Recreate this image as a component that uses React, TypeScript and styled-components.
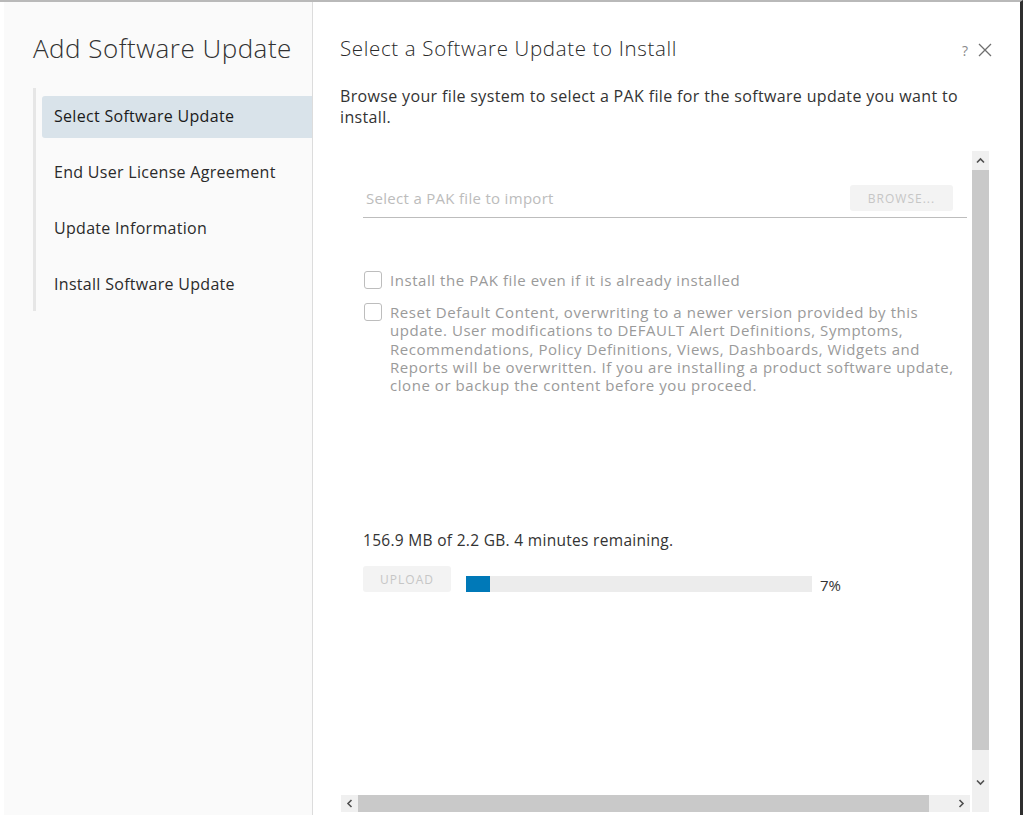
import React from 'react';
import styled, { createGlobalStyle } from 'styled-components';

const GlobalStyle = createGlobalStyle`
  html, body {
    margin: 0;
    padding: 0;
    background: #ffffff;
  }
  * {
    box-sizing: border-box;
  }
`;

const Frame = styled.div`
  width: 1023px;
  height: 815px;
  display: flex;
  border-top: 2px solid #b9b9b9;
  border-right: 3px solid #2f2f2f;
  padding-left: 4px;
  background: #ffffff;
  overflow: hidden;
`;

const Sidebar = styled.aside`
  width: 309px;
  flex-shrink: 0;
  background: #fafafa;
  border-right: 1px solid #dcdcdc;
  padding: 28px 0 0 29px;
  font-family: "Open Sans", "Noto Sans", sans-serif;
`;

const SideTitle = styled.h1`
  margin: 0;
  font-size: 26px;
  font-weight: 300;
  letter-spacing: 0.5px;
  color: #313131;
  line-height: 36px;
  white-space: nowrap;
`;

const StepList = styled.nav`
  margin-top: 22px;
  border-left: 3px solid #e6e6e6;
  padding: 8px 0 0 6px;
  height: 223px;
  display: flex;
  flex-direction: column;
  gap: 14px;
`;

const Step = styled.div<{ $active?: boolean }>`
  height: 42px;
  display: flex;
  align-items: center;
  padding: 0 0 2px 12px;
  font-size: 16px;
  letter-spacing: 0.3px;
  white-space: nowrap;
  color: ${p => (p.$active ? '#1b1b1b' : '#2b2b2b')};
  background: ${p => (p.$active ? '#d9e3ea' : 'transparent')};
  border-radius: 3px 0 0 3px;
`;

const Main = styled.main`
  flex: 1;
  display: flex;
  flex-direction: column;
  padding: 32px 31px 3px 27px;
  font-family: "Open Sans", "Noto Sans", sans-serif;
  color: #313131;
`;

const Header = styled.div`
  display: flex;
  align-items: center;
  height: 28px;
`;

const MainTitle = styled.h2`
  flex: 1;
  margin: 0;
  font-size: 20.5px;
  letter-spacing: 0.65px;
  font-weight: 300;
  color: #2a2a2a;
  white-space: nowrap;
`;

const HeaderIcons = styled.div`
  display: flex;
  align-items: center;
  gap: 10px;
  margin-right: -3px;
  padding-top: 4px;
`;

const Help = styled.span`
  font-size: 14px;
  color: #8a8a8a;
`;

const Description = styled.p`
  margin: 24px 0 0 0;
  font-size: 16px;
  letter-spacing: 0.35px;
  font-weight: 400;
  line-height: 21px;
  color: #333333;
  padding-right: 20px;
`;

const ScrollBox = styled.div`
  margin: 23px 0 0 1px;
  flex: 1;
  display: grid;
  grid-template-columns: 1fr 17px;
  grid-template-rows: 1fr 17px;
`;

const Content = styled.div`
  padding: 34px 5px 0 22px;
`;

const FileRow = styled.div`
  display: flex;
  align-items: center;
  justify-content: space-between;
  border-bottom: 1px solid #bdbdbd;
  padding: 0 14px 6px 3px;
`;

const Placeholder = styled.span`
  font-size: 15px;
  letter-spacing: 0.3px;
  color: #bcbcbc;
`;

const GhostButton = styled.button<{ $w: number }>`
  width: ${p => p.$w}px;
  height: 26px;
  border: none;
  border-radius: 3px;
  background: #f3f3f3;
  color: #c6c6c6;
  font-family: "Open Sans", "Noto Sans", sans-serif;
  font-size: 12px;
  letter-spacing: 1px;
  padding: 0;
`;

const Options = styled.div`
  margin-top: 53px;
  display: flex;
  flex-direction: column;
  gap: 14px;
`;

const Option = styled.label`
  display: flex;
  align-items: flex-start;
  gap: 8px;
  font-size: 15px;
  letter-spacing: 0.55px;
  line-height: 18.2px;
  color: #9a9a9a;
  padding-left: 1px;
  padding-right: 2px;
`;

const Box = styled.span`
  flex-shrink: 0;
  width: 18px;
  height: 18px;
  border: 1px solid #bdbdbd;
  border-radius: 3px;
  background: #ffffff;
`;

const Status = styled.div`
  margin-top: 135px;
  font-size: 15.5px;
  letter-spacing: 0.3px;
  color: #333333;
`;

const UploadRow = styled.div`
  margin-top: 12px;
  display: flex;
  align-items: center;
`;

const Track = styled.div`
  margin-left: 15px;
  margin-top: 10px;
  width: 346px;
  height: 16px;
  background: #ececec;
`;

const Fill = styled.div`
  height: 100%;
  background: #0079b8;
`;

const Percent = styled.span`
  margin-left: 8px;
  margin-top: 12px;
  font-size: 15px;
  color: #333333;
`;

const VBar = styled.div`
  grid-row: 1 / 3;
  grid-column: 2;
  background: #f0f0f0;
  display: flex;
  flex-direction: column;
`;

const HBar = styled.div`
  grid-row: 2;
  grid-column: 1;
  margin-right: 2px;
  background: #f0f0f0;
  display: flex;
  align-items: center;
`;

const ArrowCell = styled.div<{ $gapBelow?: number }>`
  width: 17px;
  height: 19px;
  display: flex;
  align-items: center;
  justify-content: center;
  flex-shrink: 0;
  margin-bottom: ${p => p.$gapBelow ?? 0}px;
`;

const VThumb = styled.div`
  width: 17px;
  height: 580px;
  background: #c9c9c9;
`;

const Spacer = styled.div`
  flex: 1;
`;

const HThumb = styled.div`
  height: 17px;
  flex: 1;
  background: #c9c9c9;
  margin-right: 24px;
`;

const Chevron = ({ dir }: { dir: 'up' | 'down' | 'left' | 'right' }) => {
  const rot = { up: 0, right: 90, down: 180, left: 270 }[dir];
  return (
    <svg width="9" height="9" viewBox="0 0 9 9" style={{ transform: `rotate(${rot}deg)` }}>
      <path d="M1 6.5 L4.5 3 L8 6.5" fill="none" stroke="#505050" strokeWidth="1.6" />
    </svg>
  );
};

const CloseIcon = () => (
  <svg width="14" height="14" viewBox="0 0 14 14">
    <path d="M1 1 L13 13 M13 1 L1 13" stroke="#6f6f6f" strokeWidth="1.3" fill="none" />
  </svg>
);

const steps = [
  'Select Software Update',
  'End User License Agreement',
  'Update Information',
  'Install Software Update',
];

const App = () => {
  const progress = 7;
  return (
    <>
      <GlobalStyle />
      <Frame>
        <Sidebar>
          <SideTitle>Add Software Update</SideTitle>
          <StepList>
            {steps.map((s, i) => (
              <Step key={s} $active={i === 0}>
                {s}
              </Step>
            ))}
          </StepList>
        </Sidebar>
        <Main>
          <Header>
            <MainTitle>Select a Software Update to Install</MainTitle>
            <HeaderIcons>
              <Help>?</Help>
              <CloseIcon />
            </HeaderIcons>
          </Header>
          <Description>
            Browse your file system to select a PAK file for the software update you want to install.
          </Description>
          <ScrollBox>
            <Content>
              <FileRow>
                <Placeholder>Select a PAK file to import</Placeholder>
                <GhostButton $w={103}>BROWSE...</GhostButton>
              </FileRow>
              <Options>
                <Option>
                  <Box />
                  Install the PAK file even if it is already installed
                </Option>
                <Option>
                  <Box />
                  <span>
                    Reset Default Content, overwriting to a newer version provided by this update. User
                    modifications to DEFAULT Alert Definitions, Symptoms, Recommendations, Policy
                    Definitions, Views, Dashboards, Widgets and Reports will be overwritten. If you are
                    installing a product software update, clone or backup the content before you proceed.
                  </span>
                </Option>
              </Options>
              <Status>156.9 MB of 2.2 GB. 4 minutes remaining.</Status>
              <UploadRow>
                <GhostButton $w={88}>UPLOAD</GhostButton>
                <Track>
                  <Fill style={{ width: `${progress}%` }} />
                </Track>
                <Percent>{progress}%</Percent>
              </UploadRow>
            </Content>
            <VBar>
              <ArrowCell>
                <Chevron dir="up" />
              </ArrowCell>
              <VThumb />
              <Spacer />
              <ArrowCell $gapBelow={20}>
                <Chevron dir="down" />
              </ArrowCell>
            </VBar>
            <HBar>
              <ArrowCell>
                <Chevron dir="left" />
              </ArrowCell>
              <HThumb />
              <ArrowCell>
                <Chevron dir="right" />
              </ArrowCell>
            </HBar>
          </ScrollBox>
        </Main>
      </Frame>
    </>
  );
};

export default App;
